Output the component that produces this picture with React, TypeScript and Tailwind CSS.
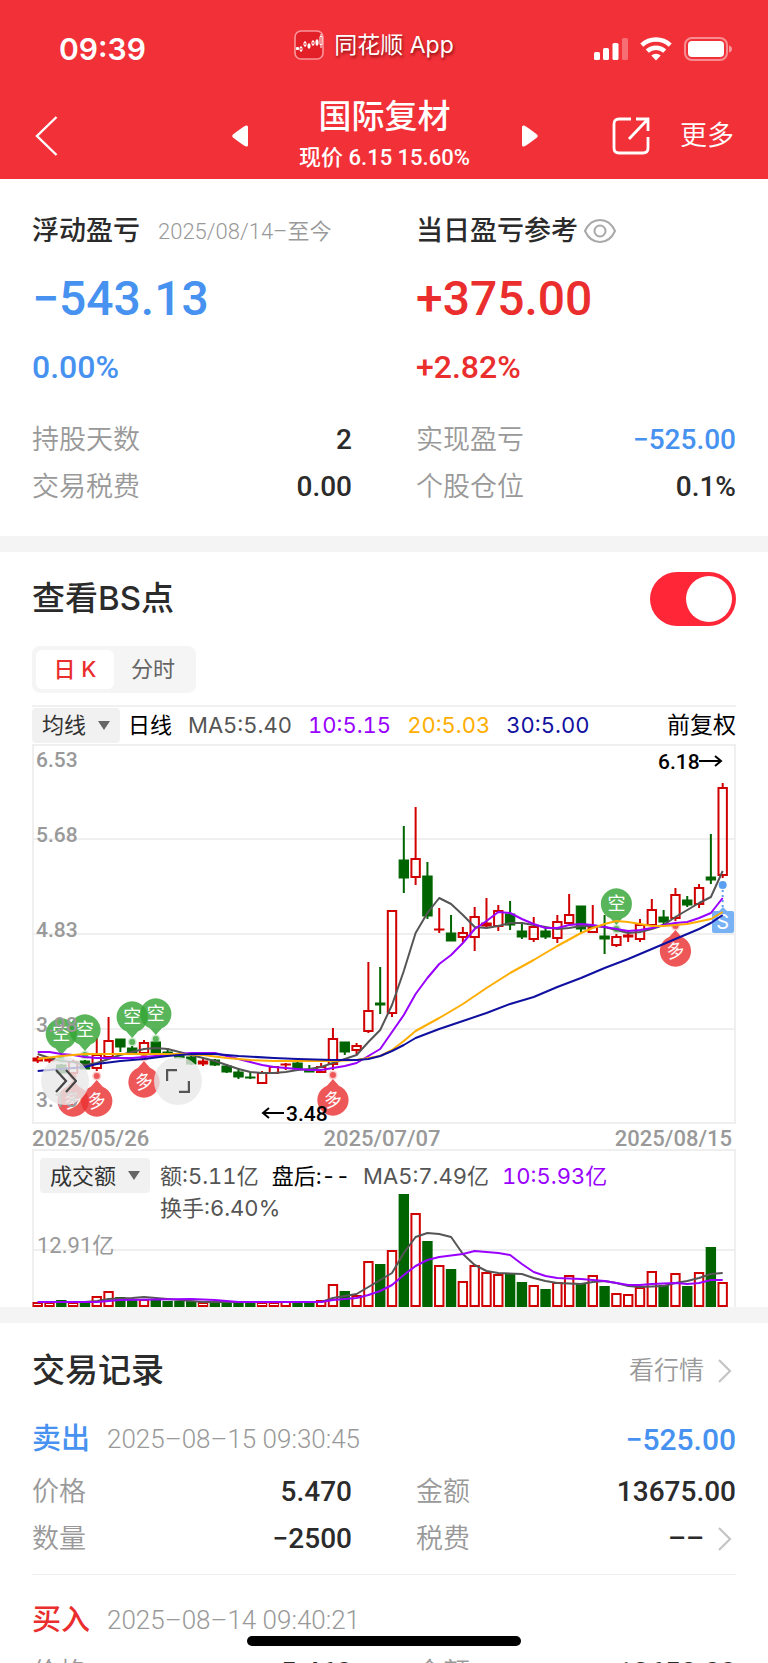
import React from "react";

type Candle = [kind: "r" | "g", high: number, top: number, bottom: number, low: number];

const CANDLES: Candle[] = [
  ["r", 1056, 1058, 1061, 1063], ["r", 1057, 1058, 1061, 1063], ["g", 1064, 1065, 1073, 1074],
  ["r", 1060, 1062, 1073, 1074], ["g", 1060, 1061, 1069, 1069], ["r", 1038, 1055, 1068, 1071],
  ["r", 1017, 1041, 1057, 1057], ["g", 1039, 1039, 1047, 1052], ["g", 1046, 1048, 1053, 1053],
  ["r", 1040, 1043, 1053, 1053], ["g", 1042, 1042, 1053, 1053], ["g", 1048, 1052, 1054, 1055],
  ["g", 1054, 1055, 1058, 1058], ["g", 1056, 1057, 1064, 1065], ["r", 1058, 1061, 1064, 1066],
  ["g", 1059, 1060, 1065, 1066], ["g", 1064, 1066, 1072, 1073], ["g", 1068, 1072, 1077, 1079],
  ["g", 1072, 1077, 1078, 1079], ["r", 1071, 1073, 1083, 1084], ["r", 1066, 1067, 1073, 1073],
  ["r", 1063, 1064, 1065, 1070], ["g", 1062, 1063, 1069, 1069], ["g", 1065, 1070, 1072, 1072],
  ["r", 1063, 1067, 1072, 1072], ["r", 1028, 1039, 1064, 1070], ["g", 1042, 1042, 1052, 1055],
  ["r", 1043, 1046, 1050, 1054], ["r", 962, 1011, 1031, 1033], ["g", 967, 1003, 1005, 1014],
  ["r", 910, 911, 1013, 1017], ["g", 826, 860, 878, 893], ["r", 807, 859, 877, 885],
  ["g", 862, 876, 916, 919], ["r", 908, 929, 930, 933], ["g", 915, 933, 941, 941],
  ["r", 927, 933, 937, 942], ["r", 907, 917, 937, 951], ["r", 898, 923, 926, 928],
  ["r", 905, 911, 926, 931], ["g", 901, 914, 925, 930], ["g", 922, 931, 937, 939],
  ["r", 917, 927, 939, 942], ["g", 927, 931, 937, 939], ["r", 915, 922, 938, 943],
  ["r", 894, 915, 923, 923], ["g", 906, 906, 929, 933], ["r", 905, 927, 932, 932],
  ["g", 915, 936, 939, 954], ["r", 934, 937, 945, 947], ["r", 931, 935, 937, 942],
  ["r", 919, 925, 939, 942], ["r", 899, 910, 925, 925], ["g", 910, 917, 922, 925],
  ["r", 888, 895, 918, 921], ["g", 896, 900, 905, 907], ["r", 884, 888, 904, 908],
  ["g", 834, 877, 880, 884], ["r", 783, 788, 875, 878],
];

const VOLUME_TOPS = [
  1303, 1303, 1300, 1303, 1302, 1297, 1292, 1297, 1299, 1300, 1300, 1301, 1301, 1301, 1303, 1302,
  1302, 1302, 1302, 1303, 1303, 1302, 1302, 1302, 1301, 1285, 1291, 1296, 1262, 1264, 1251, 1194,
  1214, 1241, 1266, 1269, 1282, 1266, 1273, 1275, 1274, 1282, 1286, 1289, 1283, 1276, 1283, 1276,
  1286, 1294, 1295, 1288, 1272, 1285, 1274, 1286, 1273, 1247, 1283,
];

const MA5 = [
  1054, 1058, 1061, 1062, 1065, 1063, 1059, 1055, 1052, 1049, 1048, 1049, 1052, 1055, 1058, 1061,
  1065, 1069, 1072, 1073, 1073, 1072, 1070, 1069, 1067, 1063, 1059, 1055, 1042, 1030, 1005, 971,
  933, 913, 898, 904, 915, 927, 928, 926, 923, 923, 925, 927, 929, 928, 926, 926, 927, 930, 933,
  932, 929, 925, 917, 910, 903, 897, 871,
];
const MA10 = [
  1052, 1052, 1054, 1055, 1057, 1058, 1058, 1058, 1058, 1057, 1056, 1055, 1054, 1053, 1053, 1053,
  1056, 1059, 1062, 1065, 1067, 1068, 1069, 1070, 1070, 1068, 1066, 1063, 1056, 1049, 1032, 1015,
  994, 978, 964, 955, 943, 929, 921, 912, 913, 919, 924, 928, 928, 925, 924, 925, 927, 929, 931,
  930, 928, 925, 923, 922, 918, 913, 898,
];
type Knot = [index: number, y: number];
const MA20: Knot[] = [
  [0, 1059], [2, 1056], [4, 1054], [12, 1054], [14, 1055], [16, 1058], [18, 1060], [20, 1061],
  [25, 1061], [27, 1060], [29, 1056], [30, 1050], [31, 1041], [32, 1031], [34, 1018], [36, 1004],
  [38, 988], [40, 973], [42, 960], [44, 946], [46, 933], [47, 928], [48, 924], [49, 921], [50, 922],
  [51, 924], [52, 926], [53, 926], [55, 924], [57, 919], [58, 912],
];
const MA30: Knot[] = [
  [0, 1071], [2, 1069], [4, 1067], [5, 1064], [7, 1061], [9, 1059], [11, 1056], [13, 1054],
  [15, 1054], [17, 1056], [20, 1058], [22, 1059], [25, 1060], [27, 1060], [28, 1059], [29, 1056],
  [30, 1051], [31, 1045], [32, 1038], [34, 1029], [36, 1021], [38, 1013], [40, 1004], [42, 997],
  [44, 987], [46, 978], [48, 968], [50, 959], [52, 949], [54, 939], [56, 929], [57, 923], [58, 915],
];
const VOLUME_MA5: Knot[] = [
  [0, 1302], [4, 1302], [5, 1301], [6, 1299], [8, 1298], [9, 1297], [10, 1298], [12, 1300],
  [14, 1302], [24, 1302], [25, 1298], [26, 1296], [27, 1294], [28, 1287], [29, 1280], [30, 1273],
  [31, 1253], [32, 1237], [33, 1233], [34, 1234], [35, 1237], [36, 1254], [37, 1265], [38, 1271],
  [39, 1273], [41, 1274], [42, 1278], [43, 1281], [44, 1283], [46, 1284], [47, 1282], [48, 1281],
  [49, 1283], [50, 1286], [51, 1287], [53, 1286], [54, 1283], [55, 1281], [56, 1278], [57, 1274],
  [58, 1273],
];
const VOLUME_MA10: Knot[] = [
  [0, 1302], [5, 1302], [7, 1300], [13, 1299], [15, 1300], [17, 1302], [24, 1302], [25, 1300],
  [27, 1298], [28, 1295], [29, 1291], [30, 1285], [31, 1275], [32, 1266], [33, 1260], [34, 1257],
  [36, 1254], [37, 1251], [39, 1253], [40, 1255], [41, 1264], [42, 1272], [43, 1276], [44, 1278],
  [46, 1279], [48, 1281], [50, 1285], [51, 1285], [52, 1284], [54, 1283], [55, 1284], [56, 1283],
  [57, 1280], [58, 1280],
];

const RED = "#d00000";
const GREEN = "#006400";
const GRID = "#efefef";
const DIN = "font-['Roboto','Noto_Sans_CJK_SC',sans-serif]";

const xAt = (i: number) => 37.7 + i * 11.81;
const dense = (ys: number[]): Knot[] => ys.map((y, i) => [i, y]);

function Line({ knots, color }: { knots: Knot[]; color: string }) {
  return (
    <polyline
      points={knots.map(([i, y]) => `${xAt(i).toFixed(1)},${y}`).join(" ")}
      fill="none"
      stroke={color}
      strokeWidth="2"
      strokeLinejoin="round"
    />
  );
}

function CandleMark({ index, candle }: { index: number; candle: Candle }) {
  const [kind, high, top, bottom, low] = candle;
  const x = xAt(index);
  const color = kind === "r" ? RED : GREEN;
  const hollow = kind === "r" && bottom - top > 3;
  return (
    <g stroke={color} strokeWidth="2">
      <path d={`M${x} ${high}V${top}M${x} ${bottom}V${low}`} />
      {hollow ? (
        <rect x={x - 4.2} y={top} width="8.4" height={bottom - top} fill="none" />
      ) : (
        <rect x={x - 4.7} y={top} width="9.4" height={Math.max(bottom - top, 1)} fill={color} strokeWidth="1" />
      )}
    </g>
  );
}

function Pin({ index, y, kind }: { index: number; y: number; kind: "long" | "short" }) {
  const x = xAt(index);
  const isShort = kind === "short";
  const dir = isShort ? 1 : -1;
  const fill = isShort ? "#35a535" : "#ea3232";
  return (
    <g>
      <circle cx={x} cy={y + dir * 25} r="4.5" fill={fill} opacity="0.25" />
      <circle cx={x} cy={y + dir * 25} r="3" fill={fill} opacity="0.75" />
      <path
        fill={fill}
        opacity="0.82"
        d={
          isShort
            ? `M${x} ${y + 21}L${x - 6} ${y + 14.3}A15.6 15.6 0 1 1 ${x + 6} ${y + 14.3}Z`
            : `M${x} ${y - 21}L${x + 6} ${y - 14.3}A15.6 15.6 0 1 1 ${x - 6} ${y - 14.3}Z`
        }
      />
      <text
        x={x}
        y={y + 6}
        textAnchor="middle"
        fontSize="18"
        fill="#fff"
        transform={isShort ? undefined : `rotate(-12 ${x} ${y})`}
      >
        {isShort ? "空" : "多"}
      </text>
    </g>
  );
}

function PriceChart() {
  return (
    <div className="relative">
      <svg viewBox="32 744 704 380" className="block h-auto w-full" role="img" aria-label="日K">
        <g stroke={GRID} strokeWidth="2" fill="none">
          <rect x="33" y="745" width="702" height="378" />
          <path d="M32 839H736M32 934H736M32 1029H736" />
        </g>
        {CANDLES.map((candle, i) => (
          <CandleMark key={i} index={i} candle={candle} />
        ))}
        <Line knots={dense(MA5)} color="#555555" />
        <Pin index={2} y={1034} kind="short" />
        <Pin index={4} y={1030} kind="short" />
        <Pin index={8} y={1017} kind="short" />
        <Pin index={10} y={1014} kind="short" />
        <Pin index={49} y={904} kind="short" />
        <Pin index={3} y={1101} kind="long" />
        <Pin index={5} y={1101} kind="long" />
        <Pin index={9} y={1082} kind="long" />
        <Pin index={25} y={1100} kind="long" />
        <Pin index={54} y={951} kind="long" />
        <g>
          <circle cx={xAt(58)} cy="885" r="4" fill="#5a9ff0" />
          <path d={`M${xAt(58)} 890V908`} stroke="#5a9ff0" strokeWidth="2" strokeDasharray="2 3" />
          <path d="M714 911h5l4-4 4 4h5q2 0 2 2v18q0 2-2 2h-18q-2 0-2-2v-18q0-2 2-2z" fill="#78b2f5" />
          <text x={xAt(58)} y="929" textAnchor="middle" fontSize="20" fill="#fff">S</text>
        </g>
        <Line knots={dense(MA10)} color="#9900ff" />
        <Line knots={MA20} color="#ffae00" />
        <Line knots={MA30} color="#1010a0" />
        <g className={DIN} fontSize="21" fontWeight="500" fill="#999">
          <text x="36" y="767">6.53</text>
          <text x="36" y="842">5.68</text>
          <text x="36" y="937">4.83</text>
          <text x="36" y="1032">3.98</text>
          <text x="36" y="1107">3.13</text>
        </g>
        <g className={DIN} fontSize="21" fontWeight="500" fill="#000">
          <text x="658" y="769">6.18</text>
          <text x="286" y="1121">3.48</text>
        </g>
        <path
          d="M699 761H721M715 756L721 761L715 766M284 1113H263M269 1108L263 1113L269 1118"
          stroke="#000"
          strokeWidth="2"
          fill="none"
        />
      </svg>
      <button
        aria-label="展开"
        className="absolute bottom-[19px] left-[9px] flex size-12 items-center justify-center rounded-full bg-[#e8e8e8]/80"
      >
        <svg viewBox="0 0 24 24" className="size-6" fill="none" stroke="#444" strokeWidth="2.2">
          <path d="M3 1L13 12L3 23M13 1L23 12L13 23" />
        </svg>
      </button>
      <button
        aria-label="全屏"
        className="absolute bottom-[19px] left-[122px] flex size-12 items-center justify-center rounded-full bg-[#e8e8e8]/80"
      >
        <svg viewBox="0 0 24 24" className="size-6" fill="none" stroke="#555" strokeWidth="2.4">
          <path d="M1 12V1H11M23 12V23H13" />
        </svg>
      </button>
    </div>
  );
}

function VolumeChart() {
  return (
    <div className="relative">
      <svg viewBox="32 1149 704 158" className="block h-auto w-full" role="img" aria-label="成交额">
        <g stroke={GRID} strokeWidth="2" fill="none">
          <path d="M33 1307V1150H735V1307M32 1250H736" />
        </g>
        {VOLUME_TOPS.map((top, i) =>
          CANDLES[i][0] === "r" ? (
            <rect key={i} x={xAt(i) - 4.2} y={top} width="8.4" height={1306 - top} fill="#fff" stroke={RED} strokeWidth="2" />
          ) : (
            <rect key={i} x={xAt(i) - 5.2} y={top} width="10.4" height={1307 - top} fill={GREEN} />
          ),
        )}
        <Line knots={VOLUME_MA5} color="#555555" />
        <Line knots={VOLUME_MA10} color="#9900ff" />
        <text x="37" y="1253" fontSize="22" fill="#999" className={DIN}>12.91亿</text>
      </svg>
      <div className="absolute inset-x-0 top-0 flex items-start gap-2.5 pt-[9px] pl-2 text-[22px] leading-8 text-[#555] tabular-nums">
        <button className="flex h-[35px] shrink-0 items-center gap-3 rounded bg-[#f1f1f1] px-2.5 text-[#333]">
          成交额
          <Caret />
        </button>
        <div className="pt-0.5 whitespace-nowrap">
          <div className="flex gap-[13px]">
            <span>额:5.11亿</span>
            <span className="text-black">盘后:--</span>
            <span>MA5:7.49亿</span>
            <span className="text-[#9900ff]">10:5.93亿</span>
          </div>
          <div>换手:6.40%</div>
        </div>
      </div>
    </div>
  );
}

function Caret() {
  return (
    <svg viewBox="0 0 12 9" className="h-[9px] w-3" fill="#666" aria-hidden="true">
      <path d="M0 0H12L6 9Z" />
    </svg>
  );
}

function Chevron() {
  return (
    <svg viewBox="0 0 14 24" className="mr-1 ml-3.5 h-6 w-3.5" fill="none" stroke="#c4c4c4" strokeWidth="2.2" aria-hidden="true">
      <path d="M1 1L12 12L1 23" />
    </svg>
  );
}

function Field({ label, value, tone = "text-[#2b2b2b]", more = false }: { label: string; value: string; tone?: string; more?: boolean }) {
  return (
    <div className="flex h-10 items-center justify-between">
      <dt className="text-[27px] font-[350] text-[#999]">{label}</dt>
      <dd className={`flex items-center text-[28px] font-medium ${DIN} ${tone}`}>
        {value}
        {more && <Chevron />}
      </dd>
    </div>
  );
}

function Trade({ side, tone, time, profit, price, amount, quantity }: {
  side: string; tone: string; time: string; profit?: string; price: string; amount: string; quantity: string;
}) {
  return (
    <article>
      <div className="flex h-10 items-center">
        <h3 className={`text-[29px] font-medium ${tone}`}>{side}</h3>
        <time className={`ml-[17px] text-[26px] font-[350] text-[#999] ${DIN}`}>{time}</time>
        {profit && <span className={`ml-auto text-[30px] font-medium text-[#4792f0] ${DIN}`}>{profit}</span>}
      </div>
      <dl className="mt-[13px] grid grid-cols-2 gap-x-16 gap-y-[7px]">
        <Field label="价格" value={price} />
        <Field label="金额" value={amount} />
        <Field label="数量" value={quantity} />
        <Field label="税费" value="––" more />
      </dl>
    </article>
  );
}

function StatusBar() {
  return (
    <div className="grid h-[98px] grid-cols-3 items-center px-9">
      <span className="pl-[23px] text-[30px] font-semibold">09:39</span>
      <span className="flex items-center justify-center gap-2.5 pr-5 pb-2 text-[23px] whitespace-nowrap">
        <svg viewBox="0 0 30 30" className="size-[30px]" aria-hidden="true">
          <rect x="1" y="1" width="28" height="28" rx="6" fill="#e31f27" stroke="#f9979b" strokeWidth="1.6" />
          <g stroke="#fff" strokeWidth="1">
            <path d="M7 16v6M11 11v6M15 13v6M19 10v6M23 9v7M27 4v14" />
            <path d="M2.500 17.500h2v2h-2zM14 14.500h2v3h-2zM22 10.500h2v4h-2z" fill="#fff" />
            <path d="M6 17.500h2v3H6zM10 12.500h2v3h-2zM18 11.500h2v3h-2zM26 6.500h2v8h-2z" fill="#e31f27" />
          </g>
        </svg>
        <span className="[text-shadow:1px_2px_3px_rgba(90,0,0,0.7)]">同花顺 App</span>
      </span>
      <span className="flex items-center justify-end gap-3">
        <svg viewBox="0 0 34 24" className="h-6 w-[34px]" fill="#fff" aria-label="信号">
          <rect x="0" y="15" width="6" height="8" rx="1.6" />
          <rect x="9" y="11" width="6" height="12" rx="1.6" />
          <rect x="18.5" y="6" width="6" height="17" rx="1.6" />
          <rect x="28" y="1" width="6" height="22" rx="1.6" opacity="0.3" />
        </svg>
        <svg viewBox="0 0 32 24" className="h-6 w-8" fill="none" stroke="#fff" strokeWidth="4.4" aria-label="Wi-Fi">
          <path d="M1.800 8.200A20.500 20.500 0 0 1 30.200 8.200M7.300 14.200A12.600 12.600 0 0 1 24.700 14.200" />
          <path d="M16 23.500L11.300 18.600A6.800 6.800 0 0 1 20.700 18.600Z" fill="#fff" stroke="none" />
        </svg>
        <svg viewBox="0 0 48 24" className="h-6 w-12" aria-label="电池">
          <rect x="1" y="1" width="42" height="22" rx="7" fill="none" stroke="#fff" strokeOpacity="0.45" strokeWidth="2" />
          <rect x="4" y="4" width="36" height="16" rx="4" fill="#fff" />
          <path d="M45 8.500q3 1 3 3.500t-3 3.500z" fill="#fff" opacity="0.5" />
        </svg>
      </span>
    </div>
  );
}

function NavBar() {
  return (
    <div className="grid h-[76px] grid-cols-[1fr_auto_1fr] items-center pr-[34px] pl-[35px]">
      <button aria-label="返回" className="justify-self-start">
        <svg viewBox="0 0 23 40" className="h-10 w-[23px]" fill="none" stroke="#fff" strokeWidth="2.4">
          <path d="M21.500 1L2 20L21.500 39" />
        </svg>
      </button>
      <div className="flex items-center gap-[50px]">
        <button aria-label="上一只">
          <svg viewBox="0 0 16 22" className="h-[22px] w-4" fill="#fff">
            <path d="M14 0.500Q16 0 16 2V20Q16 22 14 21.500Q12 21 1 12.500Q-0.500 11 1 9.500Q12 1 14 0.500Z" />
          </svg>
        </button>
        <div className="flex w-[174px] flex-col items-center gap-2 text-center whitespace-nowrap">
          <h1 className="text-[33px] leading-9 font-medium">国际复材</h1>
          <p className={`text-[22px] leading-8 font-medium ${DIN}`}>现价 6.15 15.60%</p>
        </div>
        <button aria-label="下一只">
          <svg viewBox="0 0 16 22" className="h-[22px] w-4" fill="#fff">
            <path d="M2 0.500Q0 0 0 2V20Q0 22 2 21.500Q4 21 15 12.500Q16.500 11 15 9.500Q4 1 2 0.500Z" />
          </svg>
        </button>
      </div>
      <div className="flex items-center justify-end gap-[30px]">
        <button aria-label="分享">
          <svg viewBox="0 0 38 38" className="size-[38px]" fill="none" stroke="#fff" strokeWidth="2.8">
            <path d="M19 2H7Q2 2 2 7V31Q2 36 7 36H31Q36 36 36 31V20M24 2H36V14M36 2L17 22" />
          </svg>
        </button>
        <button className="text-[27px] font-[350]">更多</button>
      </div>
    </div>
  );
}

export default function App() {
  return (
    <div className="relative h-screen overflow-hidden bg-white font-['Inter','Noto_Sans_CJK_SC',sans-serif] text-[#2b2b2b]">
      <header className="bg-[#f23038] pb-[5px] text-white">
        <StatusBar />
        <NavBar />
      </header>

      <main>
        <section className="border-b-16 border-[#f4f4f4] px-8 pt-8 pb-[29px]">
          <div className="grid grid-cols-2 gap-x-16">
            <div>
              <h2 className="flex h-10 items-center text-[27px] font-medium whitespace-nowrap">
                浮动盈亏
                <span className={`ml-[18px] text-[22px] font-[350] text-[#999] ${DIN}`}>2025/08/14–至今</span>
              </h2>
              <p className={`mt-5 text-[48px] leading-14 font-medium text-[#4792f0] ${DIN}`}>−543.13</p>
              <p className={`mt-5 text-[32px] leading-10 font-medium text-[#4792f0] ${DIN}`}>0.00%</p>
            </div>
            <div>
              <h2 className="flex h-10 items-center text-[27px] font-medium whitespace-nowrap">
                当日盈亏参考
                <button aria-label="显示或隐藏" className="ml-1.5">
                  <svg viewBox="0 0 32 24" className="h-6 w-8" fill="none" stroke="#a8a8a8" strokeWidth="2">
                    <path d="M1 12Q6 1 16 1T31 12Q26 23 16 23T1 12Z" />
                    <circle cx="16" cy="12" r="5.500" />
                  </svg>
                </button>
              </h2>
              <p className={`mt-5 text-[48px] leading-14 font-medium text-[#ea2d2d] ${DIN}`}>+375.00</p>
              <p className={`mt-5 text-[32px] leading-10 font-medium text-[#ea2d2d] ${DIN}`}>+2.82%</p>
            </div>
          </div>
          <dl className="mt-[33px] grid grid-cols-2 gap-x-16 gap-y-[7px]">
            <Field label="持股天数" value="2" />
            <Field label="实现盈亏" value="−525.00" tone="text-[#4792f0]" />
            <Field label="交易税费" value="0.00" />
            <Field label="个股仓位" value="0.1%" />
          </dl>
        </section>

        <section className="border-b-16 border-[#f4f4f4] px-8 pt-5">
          <label className="flex h-[54px] items-center justify-between text-[33px] font-medium">
            查看BS点
            <input
              type="checkbox"
              role="switch"
              defaultChecked
              className="flex h-[54px] w-[86px] appearance-none items-center rounded-full bg-[#d0d0d0] p-1 before:size-[46px] before:rounded-full before:bg-white checked:justify-end checked:bg-[#ff2638]"
            />
          </label>
          <div className="mt-5 flex h-[47px] w-fit rounded-lg bg-[#f5f5f5] p-1 text-[22px]">
            <button className="w-[78px] rounded-md bg-white font-medium text-[#ea2d2d]">日 K</button>
            <button className="w-[78px] text-[#666]">分时</button>
          </div>

          <div className="mt-3 flex h-[39px] items-center border-t-2 border-[#f0f0f0] text-[22px] whitespace-nowrap tabular-nums">
            <button className="flex h-[35px] items-center gap-3 rounded bg-[#f1f1f1] px-2.5 text-[#333]">
              均线
              <Caret />
            </button>
            <div className="ml-2 flex gap-4">
              <span className="text-black">日线</span>
              <span className="text-[#555]">MA5:5.40</span>
              <span className="text-[#9900ff]">10:5.15</span>
              <span className="text-[#ffae00]">20:5.03</span>
              <span className="text-[#1010a0]">30:5.00</span>
            </div>
            <span className="ml-auto text-[23px] text-black">前复权</span>
          </div>
          <PriceChart />
          <div className={`flex h-[25px] items-end justify-between pr-1 text-[22px] leading-[20px] font-medium text-[#999] ${DIN}`}>
            <span>2025/05/26</span>
            <span>2025/07/07</span>
            <span>2025/08/15</span>
          </div>
          <VolumeChart />
        </section>

        <section className="px-8 pt-[26px]">
          <div className="flex h-11 items-center justify-between">
            <h2 className="text-[33px] font-medium">交易记录</h2>
            <a href="#quote" className="flex items-center text-[25px] font-[350] text-[#999]">
              看行情
              <Chevron />
            </a>
          </div>
          <div className="mt-[26px]">
            <Trade
              side="卖出"
              tone="text-[#4792f0]"
              time="2025–08–15 09:30:45"
              profit="−525.00"
              price="5.470"
              amount="13675.00"
              quantity="−2500"
            />
          </div>
          <div className="mt-[15px] border-t border-[#ededed] pt-[25px]">
            <Trade side="买入" tone="text-[#ea2d2d]" time="2025–08–14 09:40:21" price="5.460" amount="13650.00" quantity="2500" />
          </div>
        </section>
      </main>

      <div className="absolute bottom-[17px] left-1/2 h-2.5 w-[274px] -translate-x-1/2 rounded-full bg-black" />
    </div>
  );
}
